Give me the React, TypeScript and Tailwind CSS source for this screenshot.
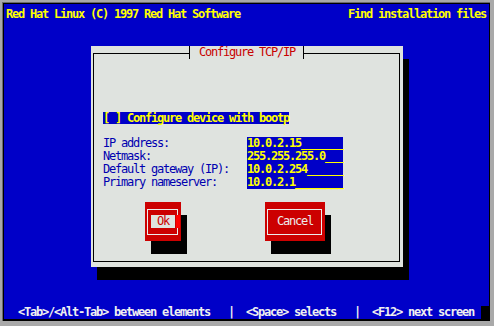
const mono = "font-['DejaVu_Sans_Mono','Liberation_Mono',monospace] text-[12px] tracking-[-1.225px]";

const topLine =
  "Red Hat Linux (C) 1997 Red Hat Software" + " ".repeat(18) + "Find installation files";
const statusLine =
  "  <Tab>/<Alt-Tab> between elements   |  <Space> selects   |  <F12> next screen";

const fields = [
  { label: "IP address:", value: "10.0.2.15_______" },
  { label: "Netmask:", value: "255.255.255.0___" },
  { label: "Default gateway (IP):", value: "10.0.2.254______" },
  { label: "Primary nameserver:", value: "10.0.2.1________" },
];

function Button({
  label,
  width,
  focused,
}: {
  label: string;
  width: string;
  focused?: boolean;
}) {
  return (
    <div
      className={`relative ${width} h-[39px] shrink-0 bg-[#cc0000] shadow-[6px_13px_0_0_#000] pt-[7px] pb-[6px] pl-[2px] pr-[3px]`}
    >
      <div className="flex h-full items-start border border-[#ececec] pt-[5px] pl-[3px]">
        <div
          className={`h-[13px] leading-[13px] whitespace-pre ${
            focused ? "bg-[#dfe3df] text-[#cc0000]" : "text-[#ececec]"
          }`}
        >
          {label}
        </div>
      </div>
      {focused && (
        <div className="absolute left-[31px] top-[13px] w-[4px] h-[13px] bg-[#ff0000]" />
      )}
    </div>
  );
}

export default function App() {
  return (
    <div className={`w-[494px] h-[326px] bg-[#a9a9a9] pl-[2px] pt-[2px] pr-[4px] pb-[5px] ${mono}`}>
      <div className="h-full border-l border-t border-[#6b6b6b]">
        <div className="flex h-full flex-col border-l border-t border-r border-b-2 border-black bg-[#0000c8]">
          {/* title bar */}
          <div className="mt-[4px] h-[12px] pl-[2px] leading-[12px] whitespace-pre font-bold text-[#ffff00]">
            {topLine}
          </div>

          {/* dialog */}
          <div className="ml-[87px] mt-[26px] flex h-[221px] w-[312px] flex-col bg-[#dfe3df] shadow-[6px_13px_0_0_#000]">
            <div className="flex h-[13px] pl-[2px] pr-[3px]">
              <div className="flex w-[97px] flex-col border-r border-black">
                <div className="mt-[7px] flex-1 border-t border-l border-black" />
              </div>
              <div className="w-[113px] pl-[9px] leading-[13px] whitespace-pre text-[#c80000]">
                Configure TCP/IP
              </div>
              <div className="flex w-[97px] flex-col border-l border-black">
                <div className="mt-[7px] flex-1 border-t border-r border-black" />
              </div>
            </div>

            <div className="mb-[5px] ml-[2px] mr-[3px] flex flex-1 flex-col border-l border-r border-b border-black">
              <div className="ml-[9px] mt-[53px] h-[12px] self-start bg-[#0000c8] leading-[12px] whitespace-pre font-bold text-[#ffff00]">
                [ ] Configure device with bootp
              </div>

              <div className="ml-[9px] mt-[13px] flex flex-col">
                {fields.map((f) => (
                  <div key={f.label} className="flex h-[13px] leading-[13px]">
                    <div className="w-[144px] whitespace-pre text-[#0000b0]">{f.label}</div>
                    <div className="w-[96px] bg-[#0000c8] whitespace-pre font-bold text-[#ffff00]">
                      {f.value}
                    </div>
                  </div>
                ))}
              </div>

              <div className="ml-[51px] mt-[13px] flex items-start gap-[84px]">
                <Button label=" Ok " width="w-[36px]" focused />
                <Button label=" Cancel " width="w-[60px]" />
              </div>
            </div>
          </div>

          <div className="flex-1" />

          {/* status bar */}
          <div className="flex h-[13px] pl-[2px] leading-[13px] font-bold text-[#f0f0f0]">
            <div className="whitespace-pre">{statusLine}</div>
            <div className="ml-auto h-full w-[8px] bg-black" />
          </div>
        </div>
      </div>
    </div>
  );
}
